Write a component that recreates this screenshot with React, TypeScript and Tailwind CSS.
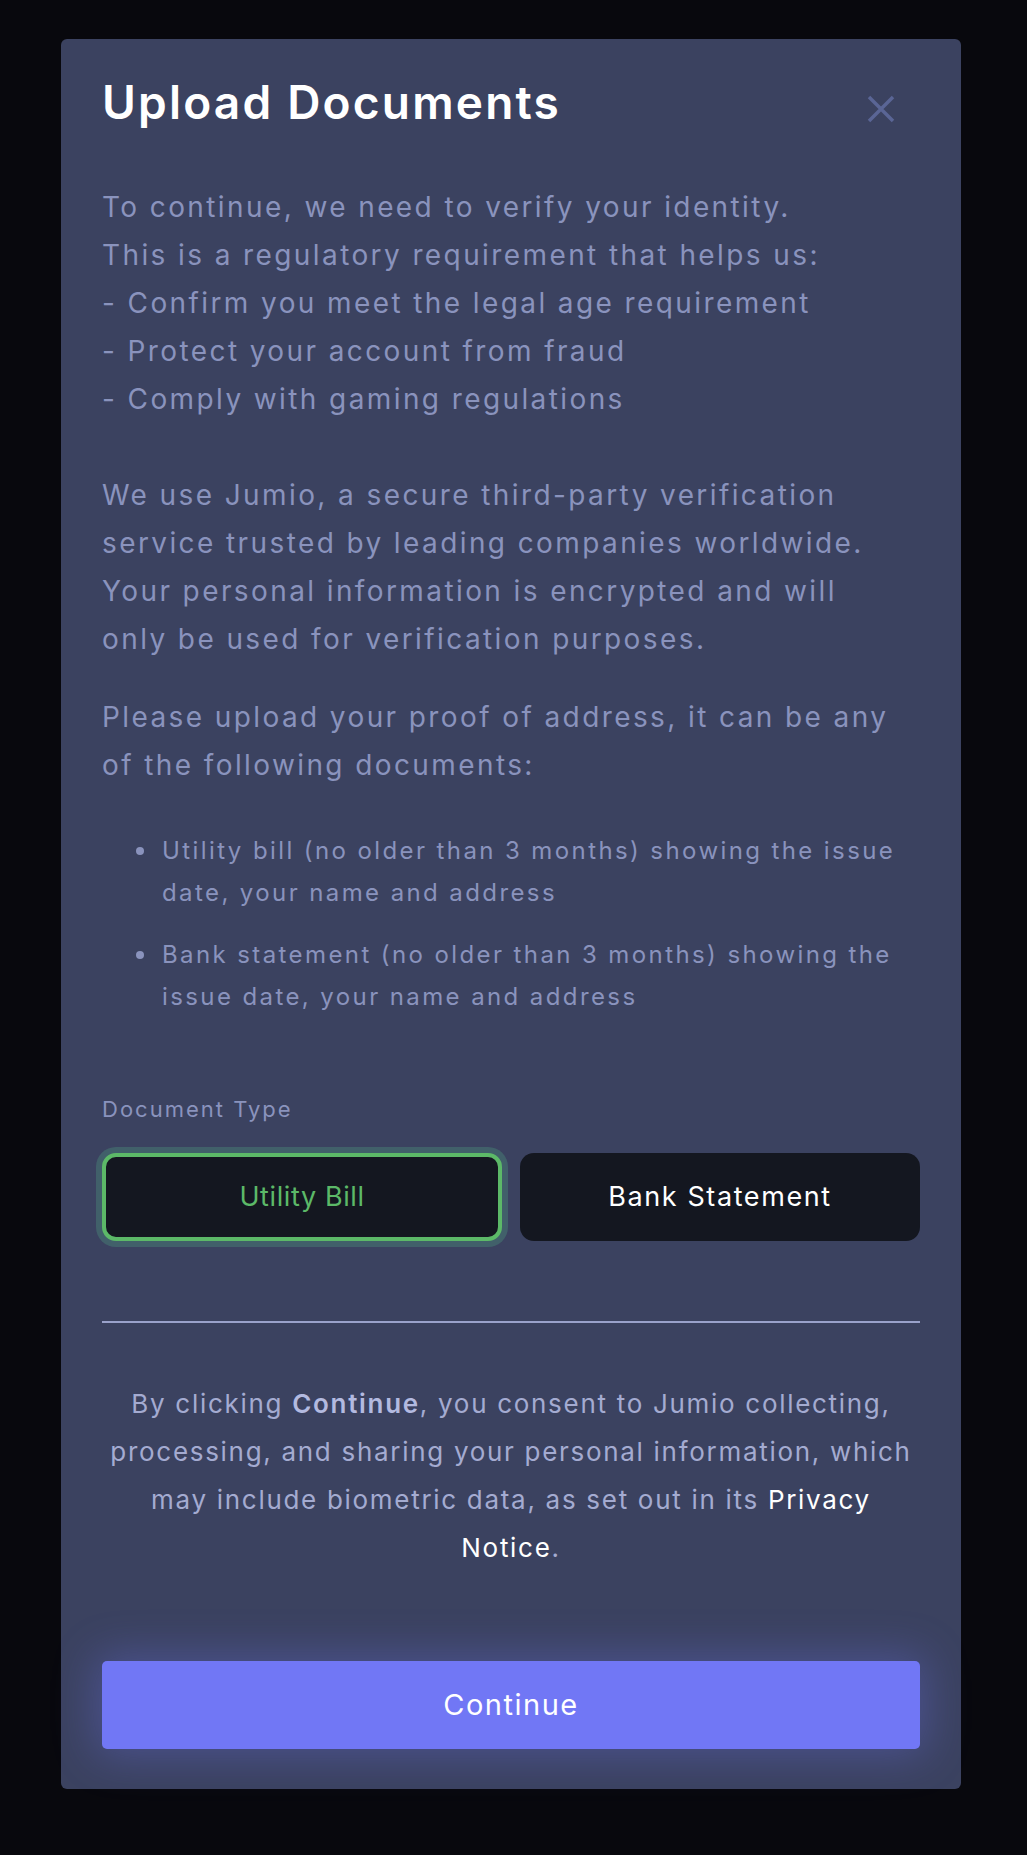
const body = "text-[#8a93bd] text-[28px] leading-[48px] tracking-[2.4px]";

const Dot = () => (
  <span className="w-[60px] flex items-center justify-start pl-[34px] h-[42px] shrink-0">
    <span className="w-[8px] h-[8px] rounded-full bg-[#8a93bd]" />
  </span>
);

const UploadModal = () => {
  return (
    <div className="w-[900px] ml-[61px] bg-[#3b4260] rounded-md px-[41px] pt-[35px] pb-[40px]">
      <div className="flex items-start justify-between">
        <h2 className="text-white text-[46px] leading-[56px] font-semibold tracking-[2.2px]">
          Upload Documents
        </h2>
        <button className="mt-[21px] mr-[25px]">
          <svg width="28" height="28" viewBox="0 0 28 28" fill="none" stroke="#5a6595" strokeWidth="3.5">
            <path d="M2 2L26 26M26 2L2 26" />
          </svg>
        </button>
      </div>

      <div className={`mt-[53px] whitespace-nowrap ${body}`}>
        <p>
          To continue, we need to verify your identity.
          <br />
          This is a regulatory requirement that helps us:
          <br />- Confirm you meet the legal age requirement
          <br />- Protect your account from fraud
          <br />- Comply with gaming regulations
        </p>
        <p className="mt-[48px]">
          We use Jumio, a secure third-party verification
          <br />
          service trusted by leading companies worldwide.
          <br />
          Your personal information is encrypted and will
          <br />
          only be used for verification purposes.
        </p>
        <p className="mt-[30px]">
          Please upload your proof of address, it can be any
          <br />
          of the following documents:
        </p>
      </div>

      <ul className="mt-[41px] flex flex-col gap-[20px] text-[#8a93bd] text-[24px] leading-[42px] tracking-[2.4px] whitespace-nowrap">
        <li className="flex">
          <Dot />
          <span>
            Utility bill (no older than 3 months) showing the issue
            <br />
            date, your name and address
          </span>
        </li>
        <li className="flex">
          <Dot />
          <span>
            Bank statement (no older than 3 months) showing the
            <br />
            issue date, your name and address
          </span>
        </li>
      </ul>

      <div className="mt-[75px] text-[#8a93bd] text-[22px] leading-[32px] tracking-[2px]">Document Type</div>

      <div className="mt-[28px] grid grid-cols-2 gap-[18px]">
        <button className="h-[88px] rounded-[14px] bg-[#141720] border-[4px] border-[#5cb968] ring-[6px] ring-[#41606a] text-[#5cb968] text-[27px] tracking-[0.6px]">
          Utility Bill
        </button>
        <button className="h-[88px] rounded-[14px] bg-[#141720] text-white text-[27px] tracking-[1.6px]">
          Bank Statement
        </button>
      </div>

      <div className="mt-[80px] h-[2px] bg-[#9aa2cb]" />

      <p className="mt-[57px] text-center text-[#a4abd1] text-[26px] leading-[48px] tracking-[1.7px] whitespace-nowrap">
        By clicking <span className="font-semibold text-[#b3bae0]">Continue</span>, you consent to Jumio collecting,
        <br />
        processing, and sharing your personal information, which
        <br />
        may include biometric data, as set out in its <span className="text-white">Privacy</span>
        <br />
        <span className="text-white">Notice</span>.
      </p>

      <button className="mt-[89px] w-full h-[88px] rounded-[5px] bg-[#7177f5] text-white text-[29px] tracking-[1.5px] shadow-[0_0_44px_6px_rgba(113,119,245,0.32)]">
        Continue
      </button>
    </div>
  );
};

export default function App() {
  return (
    <div
      className="min-h-[1855px] bg-[#08080d] pt-[39px] pb-[66px]"
      style={{ fontFamily: "Inter, 'Open Sans', sans-serif" }}
    >
      <UploadModal />
    </div>
  );
}
